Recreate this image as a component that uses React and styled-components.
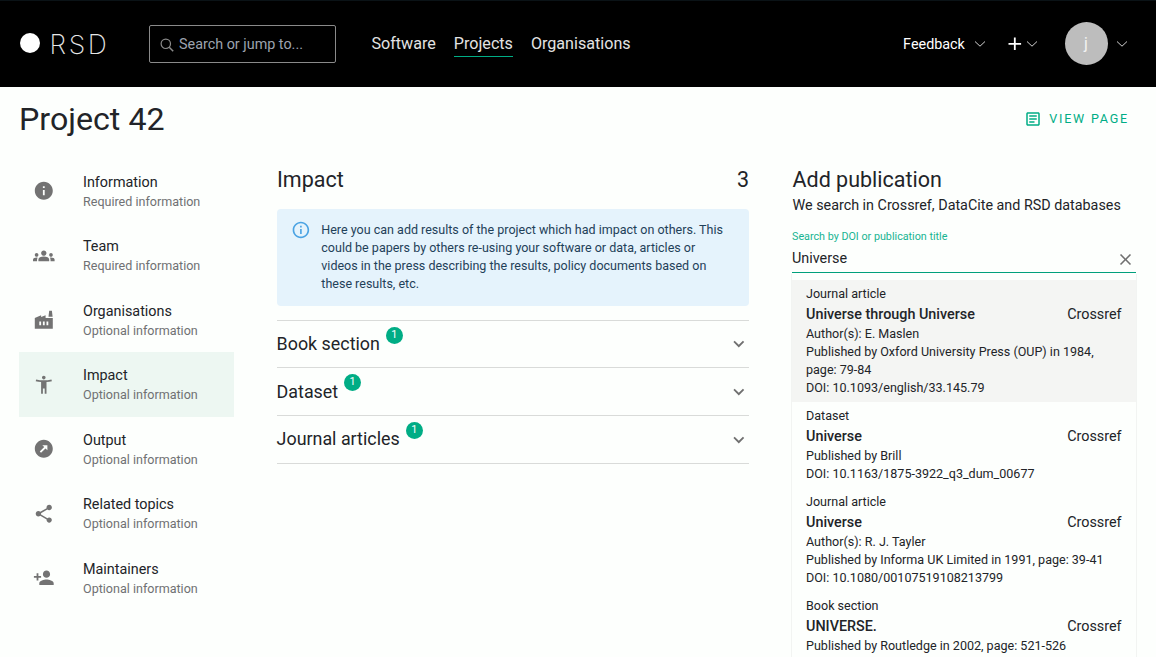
import React from 'react';
import styled, { createGlobalStyle } from 'styled-components';
import {
  MdInfo, MdGroups, MdFactory, MdAccessibilityNew, MdOutbound, MdShare,
  MdPersonAdd, MdOutlineArticle, MdOutlineInfo, MdExpandMore, MdClose, MdAdd,
} from 'react-icons/md';

const Global = createGlobalStyle`
  * { box-sizing: border-box; }
  body {
    margin: 0;
    height: 657px;
    overflow: hidden;
    background: #fdfffd;
    color: #222428;
    font-family: Roboto, "Liberation Sans", sans-serif;
    font-size: 14.36px;
  }
  h1, h2, p { margin: 0; font-weight: 400; }
  svg { display: block; flex: none; }
`;

const Header = styled.header`
  height: 87px;
  padding: 0 28px 0 19px;
  display: flex;
  align-items: center;
  background: #000;
  border-top: 1px solid #0a1216;
  color: #fff;
`;

const Logo = styled.div`
  display: flex;
  align-items: center;
  width: 130px;
  padding-left: 0.5px;
`;

const LogoDot = styled.span`
  width: 20px;
  height: 20px;
  border-radius: 50%;
  background: #fff;
  margin: 0 10px 2px 0;
`;

const LogoText = styled.span`
  font-family: Inter, sans-serif;
  font-weight: 200;
  font-size: 26.5px;
  line-height: 30px;
  letter-spacing: 2.6px;
  color: #e6e6e6;
`;

const SearchBox = styled.div`
  width: 187px;
  height: 38px;
  padding-left: 10px;
  display: flex;
  align-items: center;
  gap: 5px;
  border: 1px solid #8a8a8a;
  border-radius: 2px;
  color: #9ca3af;
`;

const Nav = styled.nav`
  display: flex;
  gap: 18px;
  margin-left: 35.5px;
  font-size: 16.12px;
  color: #e3e3e3;
`;

const NavLink = styled.a`
  line-height: 24px;
  padding-top: 1px;
  border-bottom: 1px solid ${(p) => (p.$active ? '#00ad85' : 'transparent')};
`;

const Account = styled.div`
  margin-left: auto;
  display: flex;
  align-items: center;
`;

const MenuButton = styled.div`
  display: flex;
  align-items: center;
  gap: ${(p) => p.$gap}px;
  margin-left: ${(p) => p.$left || 0}px;
`;

const Avatar = styled.span`
  width: 43px;
  height: 43px;
  margin-bottom: 1px;
  padding-right: 1px;
  border-radius: 50%;
  display: flex;
  align-items: center;
  justify-content: center;
  background: #bdbdbd;
  color: #f2f2f2;
  font-size: 16.2px;
`;

const TitleBar = styled.div`
  height: 71.7px;
  padding: 0 27px 7px 19px;
  display: flex;
  align-items: center;
  justify-content: space-between;
`;

const PageTitle = styled.h1`
  font-size: 32.2px;
  line-height: 40px;
`;

const ViewLink = styled.a`
  display: flex;
  align-items: center;
  gap: 7px;
  padding-bottom: 2px;
  color: #00ad85;
  font-size: 12.55px;
  letter-spacing: 1.8px;
  > svg { margin-top: 1px; }
`;

const Columns = styled.main`
  display: grid;
  grid-template-columns: 215px 472px 344px;
  column-gap: 43px;
  padding-left: 19px;
`;

const Sidebar = styled.nav`
  display: flex;
  flex-direction: column;
`;

const SideItem = styled.a`
  height: 64.5px;
  display: flex;
  align-items: center;
  padding: 0.6px 0 0 14px;
  background: ${(p) => (p.$active ? '#edf7f2' : 'transparent')};
`;

const SideIcon = styled.span`
  width: 50px;
  color: #737373;
`;

const SideTitle = styled.div`
  line-height: 21px;
`;

const Secondary = styled.div`
  font-size: 12.55px;
  line-height: 18px;
  color: #707173;
`;

const Heading = styled.h2`
  display: flex;
  justify-content: space-between;
  font-size: 21.5px;
  line-height: 28px;
  padding-top: 7.3px;
`;

const Alert = styled.div`
  height: 97px;
  margin: 15px 0 14px;
  padding: 12px 16px 0 14px;
  display: flex;
  gap: 10.5px;
  border-radius: 4px;
  background: #e5f3fc;
  color: #1f4159;
  font-size: 12.53px;
  line-height: 18px;
  svg { color: #4ba3e3; margin-top: -1px; }
`;

const Section = styled.div`
  height: ${(p) => p.$height}px;
  display: flex;
  align-items: center;
  border-top: 1px solid #d9dbd9;
  font-size: 17.88px;
  > svg { margin: 0 -1px 0 auto; color: #707070; }
`;

const SectionName = styled.span`
  margin-left: -0.4px;
  padding-bottom: ${(p) => p.$raise}px;
`;

const Sections = styled.div`
  border-bottom: 1px solid #d9dbd9;
`;

const Count = styled.span`
  width: 17px;
  height: 17px;
  margin: -17px 0 0 6px;
  border-radius: 50%;
  background: #00ad85;
  color: #fff;
  font-size: 10.8px;
  line-height: 16px;
  text-align: center;
`;

const Hint = styled.p`
  font-size: 14.34px;
  line-height: 22px;
  padding-top: 1px;
`;

const Field = styled.div`
  margin-top: 12px;
  height: 44px;
  border-bottom: 1px solid #00a07c;
`;

const Label = styled.div`
  color: #18b492;
  font-size: 10.76px;
  line-height: 16px;
`;

const FieldRow = styled.div`
  display: flex;
  justify-content: space-between;
  align-items: center;
  line-height: 27px;
  > svg { color: #707070; margin: 2px 0.6px 0 0; }
`;

const Results = styled.div`
  margin: 1px -1px 0;
  padding-top: 6px;
  border: 1px solid #f2f4f2;
  border-top: 0;
`;

const Result = styled.article`
  padding: 5px 14.4px 5px 14px;
  font-size: 12.56px;
  line-height: 18px;
  background: ${(p) => (p.$active ? '#f4f5f3' : 'transparent')};
`;

const ResultTitle = styled.div`
  display: flex;
  justify-content: space-between;
  font-size: 14.36px;
  line-height: 21px;
  padding-top: 1px;
`;

const Strong = styled.span`
  font-weight: 500;
`;

const AddHeading = styled.div`
  padding-left: 0.5px;
`;

const ChevronThin = () => (
  <svg width="12" height="8" viewBox="0 0 12 8" fill="none" stroke="#d0d0d0" strokeWidth="1">
    <path d="M1 1.5 6 6.2 11 1.5" />
  </svg>
);

const SearchIcon = () => (
  <svg width="14" height="15" viewBox="0 0 14 15" fill="none" stroke="#8c8c8c" strokeWidth="1.2">
    <circle cx="5.8" cy="6.8" r="4.7" />
    <path d="m9.2 10.2 4 4" strokeWidth="1.5" />
  </svg>
);

const steps = [
  ['Information', 'Required', MdInfo],
  ['Team', 'Required', MdGroups],
  ['Organisations', 'Optional', MdFactory],
  ['Impact', 'Optional', MdAccessibilityNew],
  ['Output', 'Optional', MdOutbound],
  ['Related topics', 'Optional', MdShare],
  ['Maintainers', 'Optional', MdPersonAdd],
];

const sections = [['Book section', 47, 1], ['Dataset', 48, 0], ['Journal articles', 48, 2]];

const results = [
  ['Journal article', 'Universe through Universe', [
    'Author(s): E. Maslen',
    'Published by Oxford University Press (OUP) in 1984, page: 79-84',
    'DOI: 10.1093/english/33.145.79']],
  ['Dataset', 'Universe', ['Published by Brill', 'DOI: 10.1163/1875-3922_q3_dum_00677']],
  ['Journal article', 'Universe', [
    'Author(s): R. J. Tayler',
    'Published by Informa UK Limited in 1991, page: 39-41',
    'DOI: 10.1080/00107519108213799']],
  ['Book section', 'UNIVERSE.', ['Published by Routledge in 2002, page: 521-526']],
];

export default function App() {
  return (
    <>
      <Global />
      <Header>
        <Logo><LogoDot /><LogoText>RSD</LogoText></Logo>
        <SearchBox><SearchIcon />Search or jump to...</SearchBox>
        <Nav>
          <NavLink>Software</NavLink>
          <NavLink $active>Projects</NavLink>
          <NavLink>Organisations</NavLink>
        </Nav>
        <Account>
          <MenuButton $gap={9}>Feedback<ChevronThin /></MenuButton>
          <MenuButton $gap={0} $left={18.5}><MdAdd size={21.6} /><ChevronThin /></MenuButton>
          <MenuButton $gap={8} $left={27}><Avatar>j</Avatar><ChevronThin /></MenuButton>
        </Account>
      </Header>
      <TitleBar>
        <PageTitle>Project 42</PageTitle>
        <ViewLink><MdOutlineArticle size={18} />VIEW PAGE</ViewLink>
      </TitleBar>
      <Columns>
        <Sidebar>
          {steps.map(([title, need, Icon]) => (
            <SideItem key={title} $active={title === 'Impact'}>
              <SideIcon><Icon size={21.6} /></SideIcon>
              <div>
                <SideTitle>{title}</SideTitle>
                <Secondary>{need} information</Secondary>
              </div>
            </SideItem>
          ))}
        </Sidebar>
        <section>
          <Heading><span>Impact</span><span>3</span></Heading>
          <Alert>
            <MdOutlineInfo size={19.8} />
            <p>
              Here you can add results of the project which had impact on others. This could be
              papers by others re-using your software or data, articles or videos in the press
              describing the results, policy documents based on these results, etc.
            </p>
          </Alert>
          <Sections>
            {sections.map(([name, height, raise]) => (
              <Section key={name} $height={height}>
                <SectionName $raise={raise}>{name}</SectionName>
                <Count>1</Count>
                <MdExpandMore size={21.6} />
              </Section>
            ))}
          </Sections>
        </section>
        <section>
          <AddHeading>
            <Heading>Add publication</Heading>
            <Hint>We search in Crossref, DataCite and RSD databases</Hint>
          </AddHeading>
          <Field>
            <Label>Search by DOI or publication title</Label>
            <FieldRow>Universe<MdClose size={19} /></FieldRow>
          </Field>
          <Results>
            {results.map(([kind, title, lines], i) => (
              <Result key={i} $active={i === 0}>
                <div>{kind}</div>
                <ResultTitle><Strong>{title}</Strong><span>Crossref</span></ResultTitle>
                {lines.map((line) => <div key={line}>{line}</div>)}
              </Result>
            ))}
          </Results>
        </section>
      </Columns>
    </>
  );
}
